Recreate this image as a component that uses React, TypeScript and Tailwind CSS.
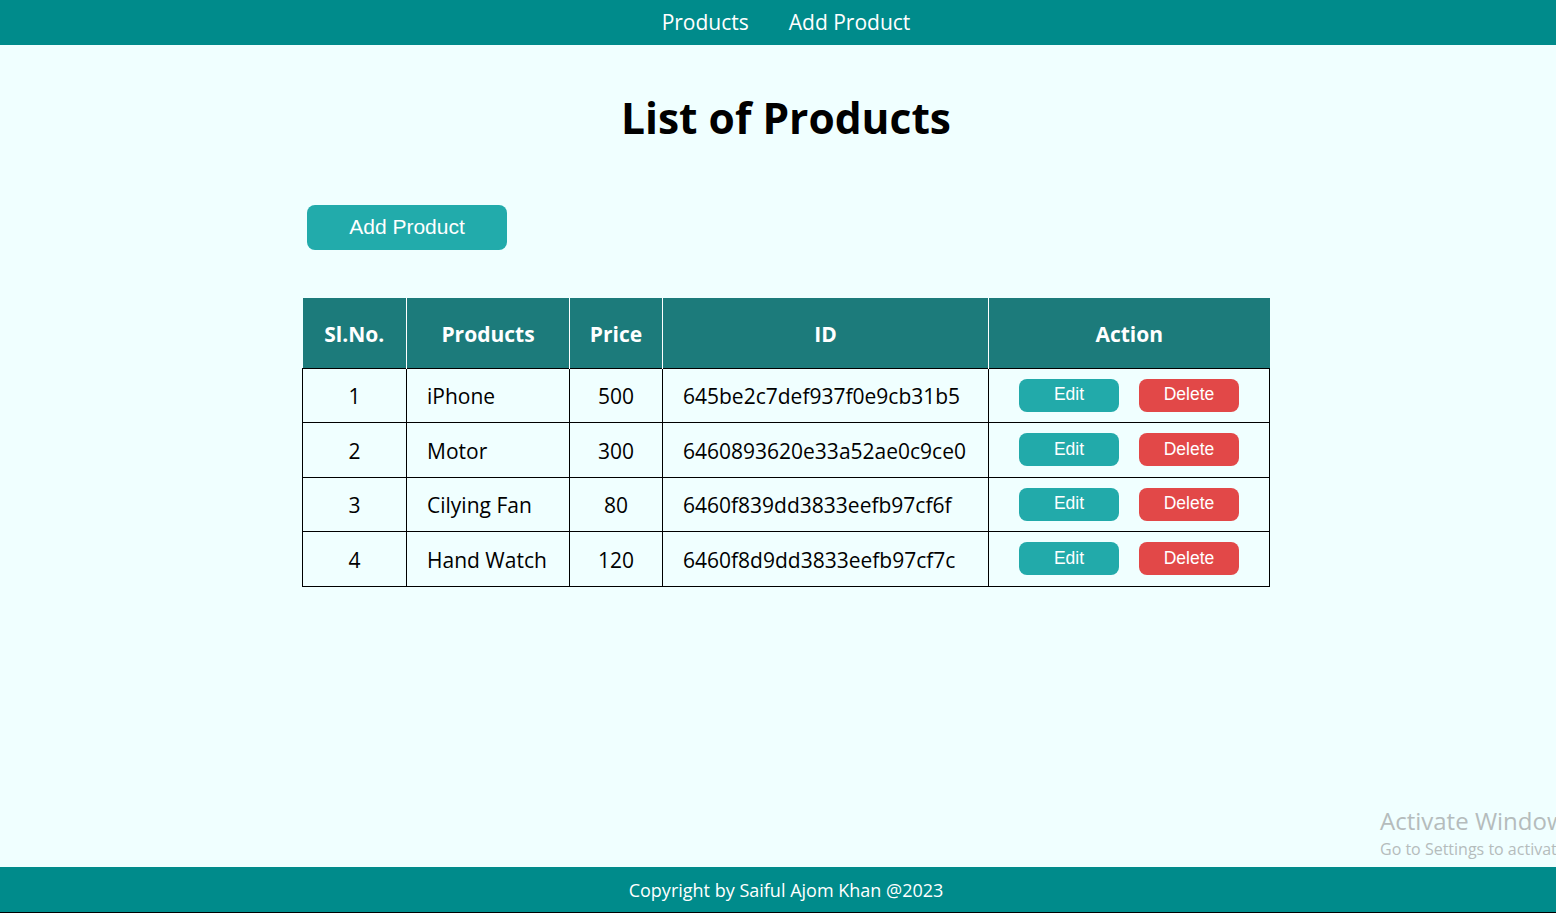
const products = [
  { sl: 1, name: "iPhone", price: 500, id: "645be2c7def937f0e9cb31b5" },
  { sl: 2, name: "Motor", price: 300, id: "6460893620e33a52ae0c9ce0" },
  { sl: 3, name: "Cilying Fan", price: 80, id: "6460f839dd3833eefb97cf6f" },
  { sl: 4, name: "Hand Watch", price: 120, id: "6460f8d9dd3833eefb97cf7c" },
];

function Navbar() {
  return (
    <nav className="h-[45px] bg-[#008b8b] flex items-center justify-center gap-[40px] text-white text-[21px] pt-[1px]">
      <a href="#">Products</a>
      <a href="#">Add Product</a>
    </nav>
  );
}

function ProductTable() {
  return (
    <table className="ml-[302px] w-[968px] border-collapse text-[21px] text-black">
      <thead>
        <tr className="h-[70px] bg-[#1c7b7b] text-white font-bold">
          <th className="w-[104px] border-r border-white pt-[3px]">Sl.No.</th>
          <th className="w-[163px] border-r border-white pt-[3px]">Products</th>
          <th className="w-[93px] border-r border-white pt-[3px]">Price</th>
          <th className="w-[326px] border-r border-white pt-[3px]">ID</th>
          <th className="pt-[3px]">Action</th>
        </tr>
      </thead>
      <tbody>
        {products.map((p) => (
          <tr key={p.id} className="h-[54.5px]">
            <td className="border border-black text-center pt-[3px]">{p.sl}</td>
            <td className="border border-black pl-[20px] pt-[3px]">{p.name}</td>
            <td className="border border-black text-center pt-[3px]">{p.price}</td>
            <td className="border border-black pl-[20px] pt-[3px]">{p.id}</td>
            <td className="border border-black">
              <div className="flex justify-center gap-[20px] font-['Liberation_Sans',sans-serif] text-[17.5px] text-white">
                <button className="w-[100px] h-[33px] rounded-[8px] bg-[#22aaaa] pb-[2px]">Edit</button>
                <button className="w-[100px] h-[33px] rounded-[8px] bg-[#e24848] pb-[2px]">Delete</button>
              </div>
            </td>
          </tr>
        ))}
      </tbody>
    </table>
  );
}

export default function App() {
  return (
    <div className="w-full overflow-hidden relative">
      <div className="w-[1572px] min-h-[913px] flex flex-col bg-[#f0ffff] font-['Open_Sans',sans-serif]">
        <Navbar />
        <main className="flex-1">
          <h1 className="text-center font-bold text-[42.5px] mt-[43px] leading-[60px]">List of Products</h1>
          <button className="ml-[307px] mt-[57px] w-[200px] h-[45px] rounded-[8px] bg-[#22abab] text-white text-[21px] font-['Liberation_Sans',sans-serif] pb-[2px]">
            Add Product
          </button>
          <div className="mt-[48px]">
            <ProductTable />
          </div>
        </main>
        <footer className="h-[46px] bg-[#008b8b] flex items-center justify-center text-white text-[18px] border-b border-black pt-[2px]">
          Copyright by Saiful Ajom Khan @2023
        </footer>
      </div>
      <div className="absolute left-[1380px] top-[805px] text-[#b5bcbc] font-['Open_Sans',sans-serif] whitespace-nowrap pointer-events-none">
        <div className="text-[24px] leading-[32px]">Activate Windows</div>
        <div className="text-[16px] leading-[24px]">Go to Settings to activate Windows.</div>
      </div>
    </div>
  );
}
